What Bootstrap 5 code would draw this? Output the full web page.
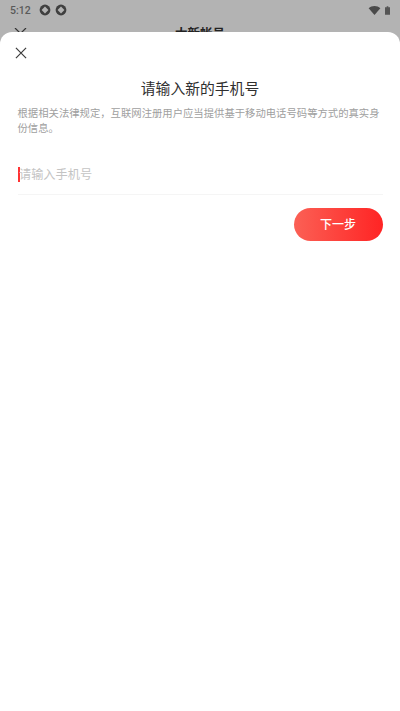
<!DOCTYPE html>
<html lang="zh">
<head>
<meta charset="utf-8">
<link href="https://cdn.jsdelivr.net/npm/bootstrap@5.3.0/dist/css/bootstrap.min.css" rel="stylesheet">
<style>
html,body{width:400px;height:711px;overflow:hidden;margin:0}
body{background:#b3b3b3;font-family:"Noto Sans CJK SC","Liberation Sans",sans-serif}
.stat-bar{height:20px;padding:0 10px 0 10px;color:#5a5a5a;font:500 10.5px Roboto,sans-serif}
.backdrop-head{height:12px;overflow:hidden;position:relative}
.backdrop-title{width:100%;text-align:center;font-size:12.5px;font-weight:700;color:#222;line-height:18px;margin-top:4px}
.back-x{position:absolute;left:14px;top:8px}
.sheet{height:679px;background:#fff;border-radius:12px 12px 0 0;padding:0 17.5px;position:relative}
.close-x{position:absolute;left:14.5px;top:15px;display:block}
.sheet-title{font-size:14.8px;line-height:20px;color:#2f2f2f;text-align:center;margin:0;padding-top:46px;font-weight:400}
.sheet-note{font-size:10.35px;line-height:15px;color:#a0a0a0;margin:7px -2px 0 0}
.phone-row{height:44px;margin-top:16px;padding-top:3px;border-bottom:1px solid #f5f5f5}
.caret-bar{width:2px;height:15px;background:#f33;flex:none}
.phone-hint{font-size:12.2px;color:#c4c4c4;line-height:15px;margin-left:-.5px}
.next-btn{width:89px;height:32.5px;border-radius:17px;background:linear-gradient(90deg,#fb6055,#ff2424);color:#fff;font-size:12px;font-weight:500;line-height:1;border:0;padding:0}
.next-wrap{margin-top:13px}
</style>
</head>
<body>
<div class="stat-bar d-flex align-items-center justify-content-between">
  <div class="d-flex align-items-center gap-2"><span>5:12</span>
    <span class="d-flex gap-1">
      <svg width="12" height="12" viewBox="0 0 12 12"><circle cx="6" cy="6" r="5.400" fill="#3f3f3f"/><path d="M6 2.600 9.400 6 6 9.400 2.600 6Z" fill="#b3b3b3"/></svg>
      <svg width="12" height="12" viewBox="0 0 12 12"><circle cx="6" cy="6" r="5.400" fill="#3f3f3f"/><path d="M6 2.600 9.400 6 6 9.400 2.600 6Z" fill="#b3b3b3"/></svg>
    </span>
  </div>
  <div class="d-flex align-items-center gap-1">
    <svg width="13" height="9" viewBox="0 0 13 10"><path d="M0 2.500C3.500-.8 9.500-.8 13 2.500L6.500 10Z" fill="#4a4a4a"/></svg>
    <svg width="5" height="9" viewBox="0 0 6 10"><path d="M2 0h2v1h2v9H0V1h2Z" fill="#555"/></svg>
  </div>
</div>
<div class="backdrop-head">
  <svg class="back-x" width="13" height="13" viewBox="0 0 13 13"><path d="M1 0 12 11M12 0 1 11" stroke="#333" stroke-width="1.200" fill="none"/></svg>
  <div class="backdrop-title">大新帐号</div>
</div>
<div class="sheet">
  <svg class="close-x" width="12" height="12" viewBox="0 0 13 13"><path d="M1 1 12 12M12 1 1 12" stroke="#3c3c3c" stroke-width="1.300" fill="none"/></svg>
  <h1 class="sheet-title">请输入新的手机号</h1>
  <p class="sheet-note">根据相关法律规定，互联网注册用户应当提供基于移动电话号码等方式的真实身份信息。</p>
  <div class="phone-row d-flex align-items-center"><span class="caret-bar"></span><span class="phone-hint">请输入手机号</span></div>
  <div class="next-wrap d-flex justify-content-end"><button class="btn next-btn" type="button">下一步</button></div>
</div>
<script src="https://cdn.jsdelivr.net/npm/bootstrap@5.3.0/dist/js/bootstrap.bundle.min.js"></script>
</body>
</html>
